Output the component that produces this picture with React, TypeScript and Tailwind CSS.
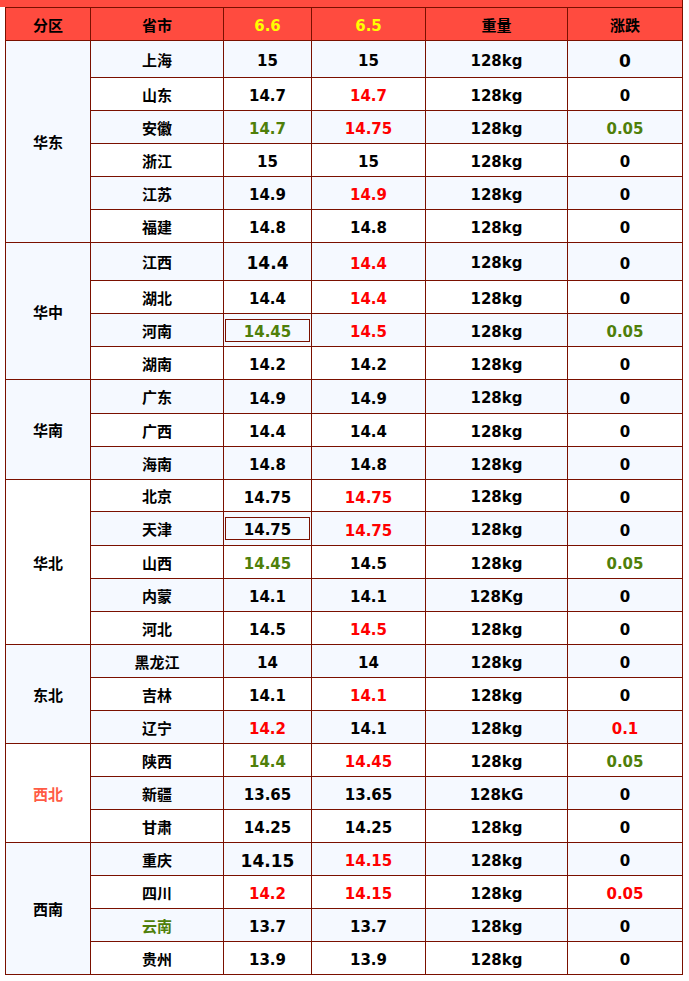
import React from 'react';

type Cell = { v: string; c?: 'r' | 'g'; big?: boolean; box?: boolean };
type Row = {
    name: string;
    nameC?: 'g';
    a: Cell;
    b: Cell;
    w?: string;
    d: Cell;
    h?: number;
    light?: boolean;
};
type Group = { region: string; regionC?: string; light?: boolean; rows: Row[] };

const groups: Group[] = [
    {
        region: '华东',
        light: true,
        rows: [
            { name: '上海', a: { v: '15' }, b: { v: '15' }, d: { v: '0', big: true }, h: 37, light: true },
            { name: '山东', a: { v: '14.7' }, b: { v: '14.7', c: 'r' }, d: { v: '0' } },
            { name: '安徽', a: { v: '14.7', c: 'g' }, b: { v: '14.75', c: 'r' }, d: { v: '0.05', c: 'g' }, light: true },
            { name: '浙江', a: { v: '15' }, b: { v: '15' }, d: { v: '0' } },
            { name: '江苏', a: { v: '14.9' }, b: { v: '14.9', c: 'r' }, d: { v: '0' }, light: true },
            { name: '福建', a: { v: '14.8' }, b: { v: '14.8' }, d: { v: '0' } },
        ],
    },
    {
        region: '华中',
        light: true,
        rows: [
            { name: '江西', a: { v: '14.4', big: true }, b: { v: '14.4', c: 'r' }, d: { v: '0' }, h: 38, light: true },
            { name: '湖北', a: { v: '14.4' }, b: { v: '14.4', c: 'r' }, d: { v: '0' } },
            { name: '河南', a: { v: '14.45', c: 'g', box: true }, b: { v: '14.5', c: 'r' }, d: { v: '0.05', c: 'g' }, light: true },
            { name: '湖南', a: { v: '14.2' }, b: { v: '14.2' }, d: { v: '0' } },
        ],
    },
    {
        region: '华南',
        light: true,
        rows: [
            { name: '广东', a: { v: '14.9' }, b: { v: '14.9' }, d: { v: '0' }, h: 34, light: true },
            { name: '广西', a: { v: '14.4' }, b: { v: '14.4' }, d: { v: '0' } },
            { name: '海南', a: { v: '14.8' }, b: { v: '14.8' }, d: { v: '0' }, light: true },
        ],
    },
    {
        region: '华北',
        rows: [
            { name: '北京', a: { v: '14.75' }, b: { v: '14.75', c: 'r' }, d: { v: '0' }, h: 32 },
            { name: '天津', a: { v: '14.75', box: true }, b: { v: '14.75', c: 'r' }, d: { v: '0' }, h: 34, light: true },
            { name: '山西', a: { v: '14.45', c: 'g' }, b: { v: '14.5' }, d: { v: '0.05', c: 'g' } },
            { name: '内蒙', a: { v: '14.1' }, b: { v: '14.1' }, w: '128Kg', d: { v: '0' }, light: true },
            { name: '河北', a: { v: '14.5' }, b: { v: '14.5', c: 'r' }, d: { v: '0' } },
        ],
    },
    {
        region: '东北',
        light: true,
        rows: [
            { name: '黑龙江', a: { v: '14' }, b: { v: '14' }, d: { v: '0' }, light: true },
            { name: '吉林', a: { v: '14.1' }, b: { v: '14.1', c: 'r' }, d: { v: '0' } },
            { name: '辽宁', a: { v: '14.2', c: 'r' }, b: { v: '14.1' }, d: { v: '0.1', c: 'r' }, light: true },
        ],
    },
    {
        region: '西北',
        regionC: 'text-[#ff5b45]',
        rows: [
            { name: '陕西', a: { v: '14.4', c: 'g' }, b: { v: '14.45', c: 'r' }, d: { v: '0.05', c: 'g' } },
            { name: '新疆', a: { v: '13.65' }, b: { v: '13.65' }, w: '128kG', d: { v: '0' }, light: true },
            { name: '甘肃', a: { v: '14.25' }, b: { v: '14.25' }, d: { v: '0' } },
        ],
    },
    {
        region: '西南',
        light: true,
        rows: [
            { name: '重庆', a: { v: '14.15', big: true }, b: { v: '14.15', c: 'r' }, d: { v: '0' }, light: true },
            { name: '四川', a: { v: '14.2', c: 'r' }, b: { v: '14.15', c: 'r' }, d: { v: '0.05', c: 'r' } },
            { name: '云南', nameC: 'g', a: { v: '13.7' }, b: { v: '13.7' }, d: { v: '0' }, light: true },
            { name: '贵州', a: { v: '13.9' }, b: { v: '13.9' }, d: { v: '0' } },
        ],
    },
];

const colorOf = (c?: 'r' | 'g') =>
    c === 'r' ? 'text-[#ff0000]' : c === 'g' ? 'text-[#4f7f0a]' : 'text-black';

function Val({ cell }: { cell: Cell }) {
    const text = (
        <span className={`${colorOf(cell.c)} ${cell.big ? 'text-[17px]' : 'text-[15px]'}`}>
            {cell.v}
        </span>
    );
    if (cell.box) {
        return (
            <div className="mx-[1px] h-[23px] pt-[4px] border border-[#7a1000] flex items-center justify-center">
                {text}
            </div>
        );
    }
    return text;
}

// text sits a little low in the original cells
const td = 'border border-[#7a1000] text-center align-middle px-0 pt-[4px] pb-0';
const tdBox = 'border border-[#7a1000] text-center align-middle p-0';

export default function App() {
    return (
        <div
            className="w-[689px] h-[981px] bg-white font-bold"
            style={{ fontFamily: '"DejaVu Sans", "Noto Sans CJK SC", sans-serif' }}
        >
            <div className="w-[683px] h-[7px] bg-[#ff4b3f] border-r border-[#7a1000]" />
            <table className="ml-[5px] border-collapse table-fixed w-[678px] leading-none">
                <colgroup>
                    <col className="w-[85px]" />
                    <col className="w-[133px]" />
                    <col className="w-[88px]" />
                    <col className="w-[114px]" />
                    <col className="w-[142px]" />
                    <col className="w-[115px]" />
                </colgroup>
                <thead>
                    <tr className="bg-[#ff4b3f] h-[33px]">
                        <th className={`${td} text-[15px] text-black`}>分区</th>
                        <th className={`${td} text-[15px] text-black`}>省市</th>
                        <th className={`${td} text-[15px] text-[#ffff00]`}>6.6</th>
                        <th className={`${td} text-[15px] text-[#ffff00]`}>6.5</th>
                        <th className={`${td} text-[15px] text-black`}>重量</th>
                        <th className={`${td} text-[15px] text-black`}>涨跌</th>
                    </tr>
                </thead>
                <tbody>
                    {groups.map((g) =>
                        g.rows.map((r, i) => (
                            <tr
                                key={g.region + r.name}
                                className={r.light ? 'bg-[#f5f9ff]' : 'bg-white'}
                                style={{ height: r.h ?? 33 }}
                            >
                                {i === 0 && (
                                    <td
                                        rowSpan={g.rows.length}
                                        className={`${td} text-[15px] ${g.light ? 'bg-[#f5f9ff]' : 'bg-white'} ${g.regionC ?? 'text-black'}`}
                                    >
                                        {g.region}
                                    </td>
                                )}
                                <td className={`${td} text-[15px] ${r.nameC === 'g' ? 'text-[#4f7f0a]' : 'text-black'}`}>
                                    {r.name}
                                </td>
                                <td className={r.a.box ? tdBox : td}>
                                    <Val cell={r.a} />
                                </td>
                                <td className={td}>
                                    <Val cell={r.b} />
                                </td>
                                <td className={`${td} text-[15px] text-black`}>{r.w ?? '128kg'}</td>
                                <td className={td}>
                                    <Val cell={r.d} />
                                </td>
                            </tr>
                        )),
                    )}
                </tbody>
            </table>
        </div>
    );
}
